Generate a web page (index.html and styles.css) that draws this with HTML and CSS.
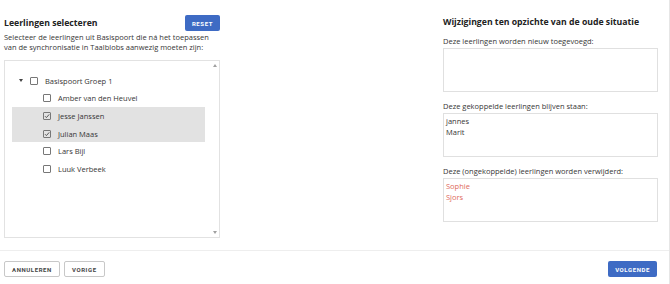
FILE: index.html
```html
<!DOCTYPE html>
<html lang="nl">
<head>
    <meta charset="UTF-8">
    <meta name="viewport" content="width=device-width, initial-scale=1.0">
    <title>Leerlingen selecteren</title>
    <link rel="stylesheet" href="styles.css">
</head>
<body>
<div class="page">
    <div class="main">
        <div class="left">
            <div class="left-head">
                <h2>Leerlingen selecteren</h2>
                <button class="btn btn-primary">RESET</button>
            </div>
            <p class="intro">Selecteer de leerlingen uit Basispoort die ná het toepassen van de synchronisatie in Taalblobs aanwezig moeten zijn:</p>
            <div class="tree-box">
                <ul class="tree">
                    <li class="row parent">
                        <span class="caret"></span>
                        <span class="check"></span>
                        <span>Basispoort Groep 1</span>
                    </li>
                    <li class="row child">
                        <span class="check"></span>
                        <span>Amber van den Heuvel</span>
                    </li>
                    <li class="row child selected">
                        <span class="check">
                            <svg viewBox="0 0 8 8" width="8" height="8"><path d="M2 4.2 L3.4 5.6 L6.2 2.4" fill="none" stroke="#555" stroke-width="1"/></svg>
                        </span>
                        <span>Jesse Janssen</span>
                    </li>
                    <li class="row child selected">
                        <span class="check">
                            <svg viewBox="0 0 8 8" width="8" height="8"><path d="M2 4.2 L3.4 5.6 L6.2 2.4" fill="none" stroke="#555" stroke-width="1"/></svg>
                        </span>
                        <span>Julian Maas</span>
                    </li>
                    <li class="row child">
                        <span class="check"></span>
                        <span>Lars Bijl</span>
                    </li>
                    <li class="row child">
                        <span class="check"></span>
                        <span>Luuk Verbeek</span>
                    </li>
                </ul>
                <div class="scrollbar">
                    <span class="arrow up"></span>
                    <span class="arrow down"></span>
                </div>
            </div>
        </div>
        <div class="right">
            <h2>Wijzigingen ten opzichte van de oude situatie</h2>
            <label class="field-label">Deze leerlingen worden nieuw toegevoegd:</label>
            <div class="list-box"></div>
            <label class="field-label">Deze gekoppelde leerlingen blijven staan:</label>
            <div class="list-box">
                <div>jannes</div>
                <div>Marit</div>
            </div>
            <label class="field-label">Deze (ongekoppelde) leerlingen worden verwijderd:</label>
            <div class="list-box removed">
                <div>Sophie</div>
                <div>Sjors</div>
            </div>
        </div>
    </div>
    <div class="footer">
        <div class="footer-left">
            <button class="btn btn-outline">ANNULEREN</button>
            <button class="btn btn-outline">VORIGE</button>
        </div>
        <button class="btn btn-primary">VOLGENDE</button>
    </div>
</div>
</body>
</html>
```
FILE: styles.css
```css
* {
    box-sizing: border-box;
}
body {
    margin: 0;
    background: #fff;
    color: #363636;
    font-family: "Open Sans", sans-serif;
    font-size: 7.5px;
}
.page {
    width: 670px;
    height: 284px;
    border-right: 1px solid #e6e6e6;
}
.main {
    display: flex;
    justify-content: space-between;
    padding: 15px 11px 0 4px;
    height: 250px;
}
h2 {
    margin: 0;
    font-size: 8.7px;
    font-weight: 700;
    color: #222;
}
.left {
    width: 216px;
    flex: none;
}
.left-head {
    display: flex;
    justify-content: space-between;
    align-items: center;
}
.intro {
    margin: 1px 0 0;
    line-height: 10px;
}
.btn {
    font-family: "Roboto", sans-serif;
    font-size: 6px;
    font-weight: 700;
    letter-spacing: 0.6px;
    height: 16px;
    border-radius: 2px;
    cursor: pointer;
}
.btn-primary {
    background: #3e6bc4;
    color: #fff;
    border: none;
    padding: 0 7px;
}
.btn-outline {
    background: #fff;
    color: #444;
    border: 1px solid #c8c8c8;
    padding: 0 7px;
}
.tree-box {
    margin-top: 8px;
    height: 178px;
    border: 1px solid #e2e2e2;
    display: flex;
}
.tree {
    list-style: none;
    margin: 11px 0 0 7px;
    padding: 0;
    width: 193px;
}
.row {
    display: flex;
    align-items: center;
    height: 17.6px;
}
.parent {
    padding-left: 7px;
}
.child {
    padding-left: 31px;
}
.selected {
    background: #e2e2e2;
}
.caret {
    width: 0;
    height: 0;
    border-left: 2.5px solid transparent;
    border-right: 2.5px solid transparent;
    border-top: 3px solid #444;
    margin-right: 7px;
}
.check {
    width: 8px;
    height: 8px;
    border: 1px solid #777;
    border-radius: 1px;
    margin-right: 7px;
    position: relative;
}
.check svg {
    position: absolute;
    left: -1px;
    top: -1px;
}
.scrollbar {
    margin-left: auto;
    width: 9px;
    display: flex;
    flex-direction: column;
    justify-content: space-between;
    align-items: center;
    padding: 3px 0;
}
.arrow {
    width: 0;
    height: 0;
    border-left: 2.5px solid transparent;
    border-right: 2.5px solid transparent;
}
.arrow.up {
    border-bottom: 3px solid #a0a0a0;
}
.arrow.down {
    border-top: 3px solid #a0a0a0;
}
.right {
    width: 215px;
    flex: none;
    display: flex;
    flex-direction: column;
}
.right h2 {
    margin-top: 1px;
    margin-bottom: 8px;
}
.field-label {
    display: block;
    margin-bottom: 2px;
}
.list-box {
    height: 44px;
    border: 1px solid #e0e0e0;
    padding: 2px 2px;
    line-height: 10.5px;
    margin-bottom: 9px;
}
.removed {
    color: #e06a5c;
}
.footer {
    border-top: 1px solid #eeeeee;
    display: flex;
    justify-content: space-between;
    align-items: center;
    padding: 10px 12px 0 4px;
}
.footer-left {
    display: flex;
    gap: 4px;
}
```
